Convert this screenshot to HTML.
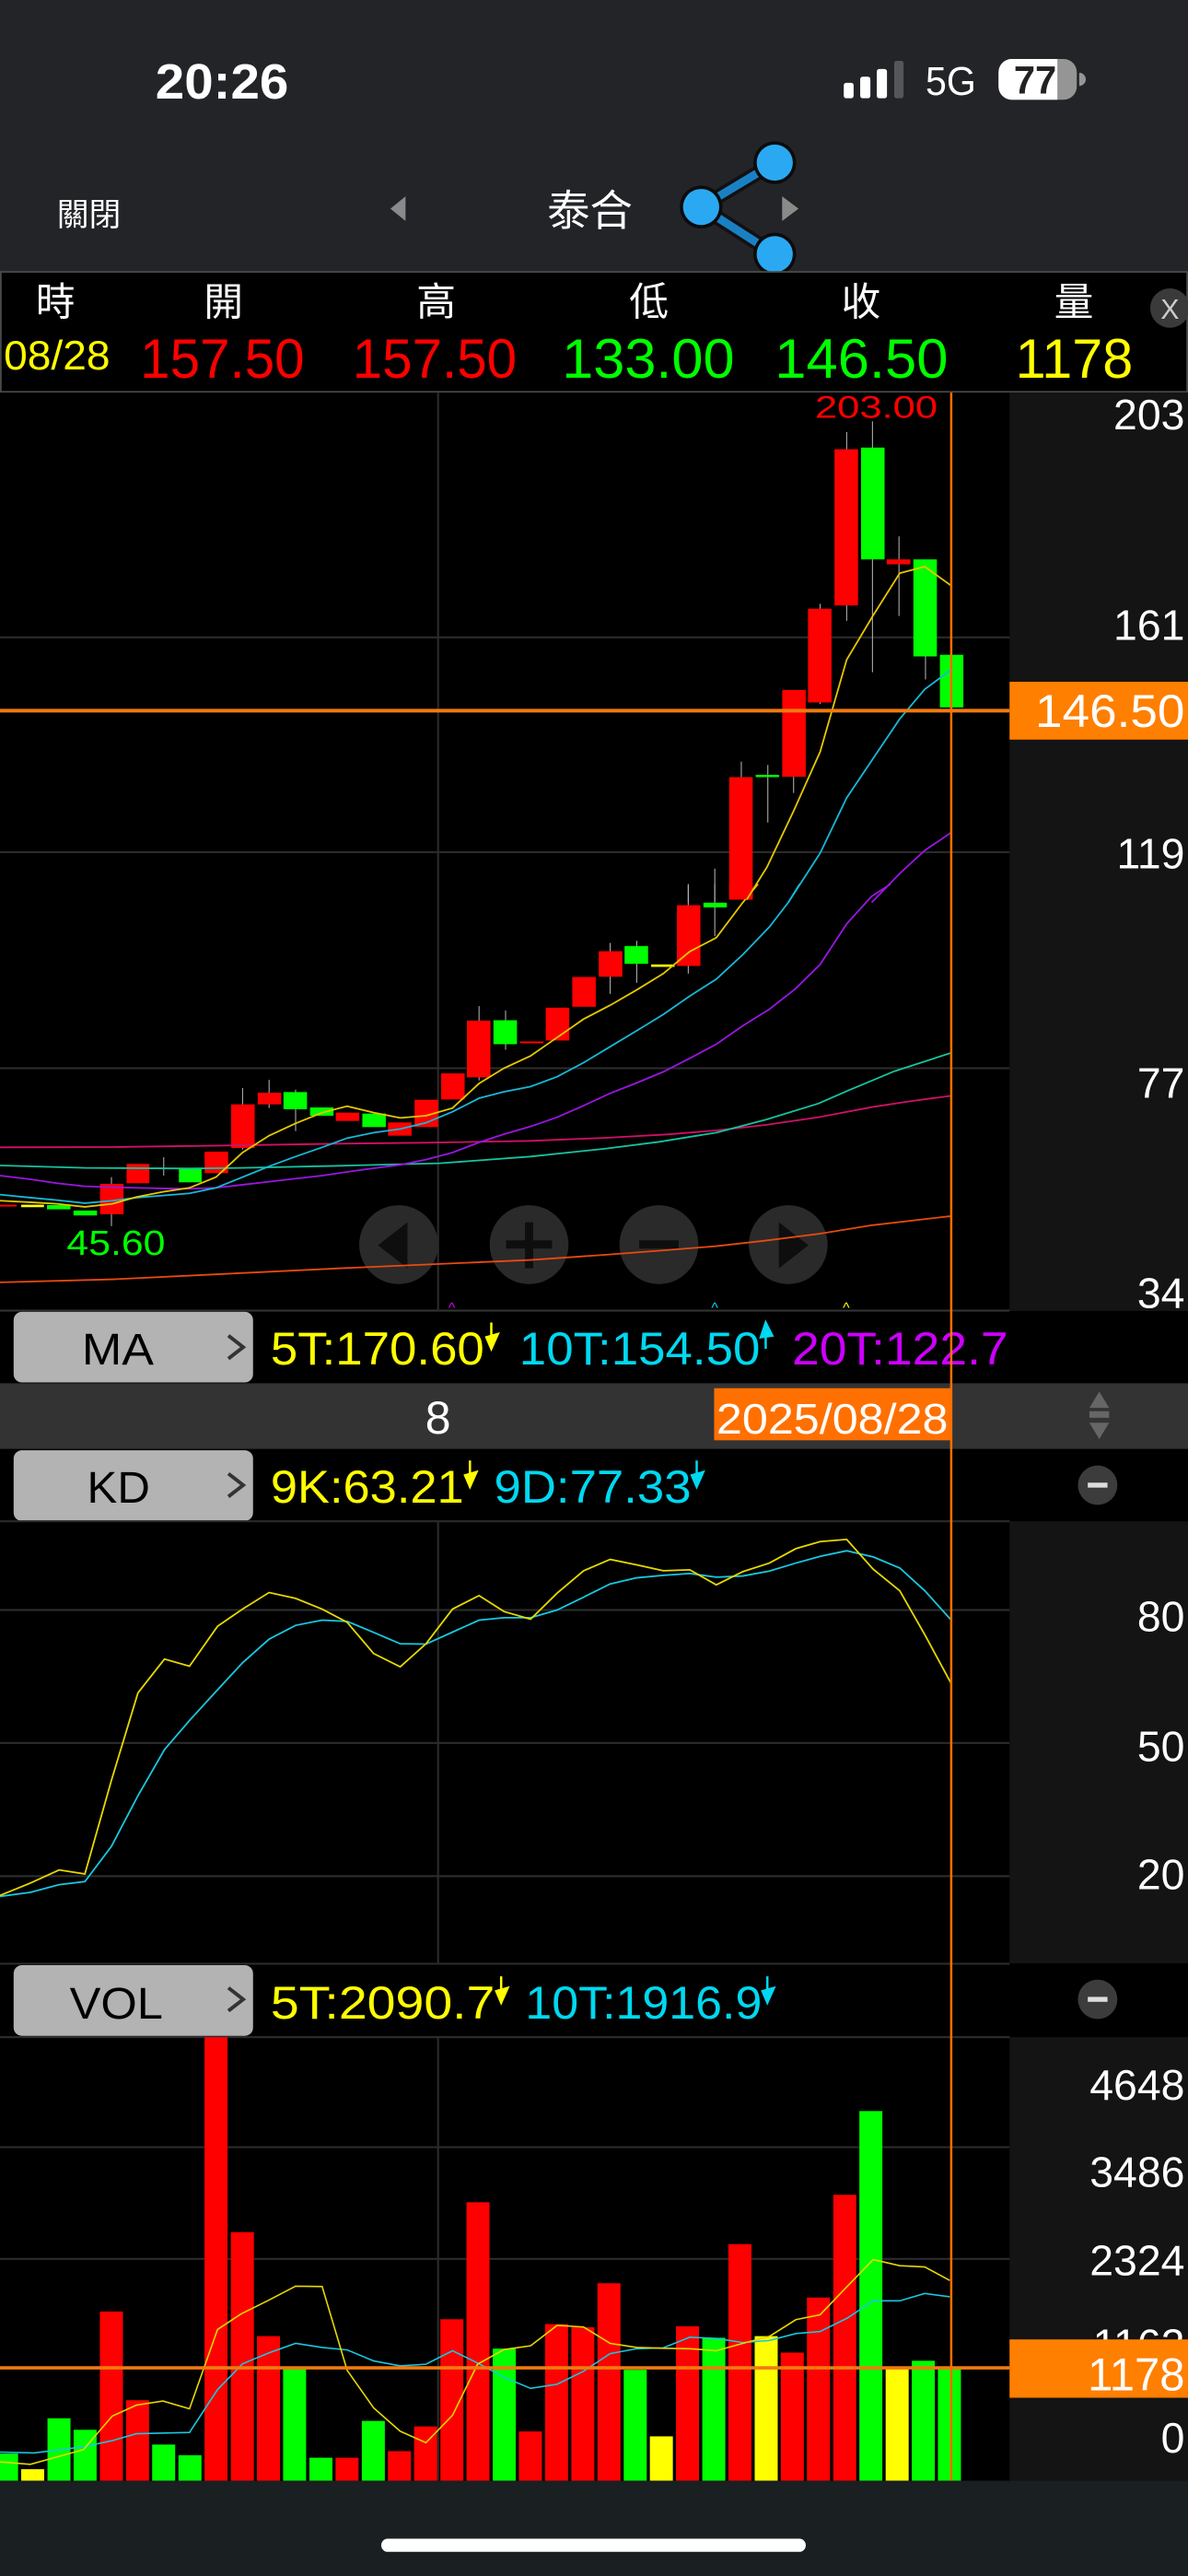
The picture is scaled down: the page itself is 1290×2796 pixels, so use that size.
<!DOCTYPE html>
<html><head><meta charset="utf-8"><style>
html,body{margin:0;padding:0;background:#000;}
svg{display:block}
text{font-family:"Liberation Sans","Noto Sans CJK TC",sans-serif;}
</style></head><body>
<svg xmlns="http://www.w3.org/2000/svg" width="1290" height="2796" viewBox="0 0 723 1568" preserveAspectRatio="none">
<!-- header bg -->
<rect x="0" y="0" width="723" height="166" fill="#232428"/>
<text x="94.6" y="60" font-size="30" fill="#fff" font-weight="bold" textLength="81" lengthAdjust="spacingAndGlyphs">20:26</text>
<rect x="513.5" y="50.4" width="6" height="9.4" rx="1.5" fill="#fff"/>
<rect x="523.5" y="46.7" width="6.2" height="13.1" rx="1.5" fill="#fff"/>
<rect x="533.6" y="42" width="6.2" height="17.8" rx="1.5" fill="#fff"/>
<rect x="544.2" y="37" width="5.7" height="22.8" rx="1.5" fill="#55565a"/>
<text x="563.3" y="57.9" font-size="24.5" fill="#fff" textLength="30.7" lengthAdjust="spacingAndGlyphs">5G</text>
<rect x="607.7" y="35.9" width="47.6" height="24.8" rx="8" fill="#959595"/>
<path d="M615.7 35.9 H643.5 V60.7 H615.7 A8 8 0 0 1 607.7 52.7 V43.9 A8 8 0 0 1 615.7 35.9Z" fill="#fff"/>
<text x="617" y="57" font-size="24" font-weight="bold" fill="#222" textLength="26" lengthAdjust="spacingAndGlyphs">77</text>
<path d="M656.8 44.3 A4 4 0 0 1 656.8 52.3Z" fill="#959595"/>
<text x="34.6" y="137.5" font-size="19.5" fill="#fff">關閉</text>
<polygon points="246.8,119.5 246.8,134.5 237.6,127" fill="#8a8a8a"/>
<text x="333" y="137.5" font-size="26" fill="#fff">泰合</text>
<polygon points="476,119.5 476,134.5 486,127" fill="#8a8a8a"/>
<g>
<line x1="426.7" y1="126" x2="471.5" y2="99" stroke="#111" stroke-width="9"/>
<line x1="426.7" y1="126" x2="471.5" y2="154.7" stroke="#111" stroke-width="9"/>
<line x1="426.7" y1="126" x2="471.5" y2="99" stroke="#1a80c4" stroke-width="5"/>
<line x1="426.7" y1="126" x2="471.5" y2="154.7" stroke="#1a80c4" stroke-width="5"/>
<circle cx="471.5" cy="99" r="13" fill="#0b0b0b"/>
<circle cx="426.7" cy="126" r="13" fill="#0b0b0b"/>
<circle cx="471.5" cy="154.7" r="13" fill="#0b0b0b"/>
<circle cx="471.5" cy="99" r="11" fill="#2aa9f2"/>
<circle cx="426.7" cy="126" r="11" fill="#2aa9f2"/>
<circle cx="471.5" cy="154.7" r="11" fill="#2aa9f2"/>
</g>
<!-- info table -->
<rect x="0.5" y="165.5" width="722" height="73" fill="#000" stroke="#4a4a4a" stroke-width="1"/>
<g font-size="24" fill="#fff">
<text x="21.7" y="192">時</text><text x="124" y="192">開</text><text x="253.5" y="192">高</text>
<text x="383" y="192">低</text><text x="512" y="192">收</text><text x="641.5" y="192">量</text>
</g>
<circle cx="712" cy="187.5" r="12" fill="#3a3a3a"/>
<text x="712" y="194" font-size="17" fill="#ccc" text-anchor="middle">X</text>
<text x="2.3" y="225" font-size="25" fill="#ffff00" textLength="64.7" lengthAdjust="spacingAndGlyphs">08/28</text>
<text x="85.3" y="230" font-size="34" fill="#ff0000" textLength="100" lengthAdjust="spacingAndGlyphs">157.50</text>
<text x="214.5" y="230" font-size="34" fill="#ff0000" textLength="100" lengthAdjust="spacingAndGlyphs">157.50</text>
<text x="342" y="230" font-size="34" fill="#00ff00" textLength="105" lengthAdjust="spacingAndGlyphs">133.00</text>
<text x="471.5" y="230" font-size="34" fill="#00ff00" textLength="105.5" lengthAdjust="spacingAndGlyphs">146.50</text>
<text x="618" y="230" font-size="34" fill="#ffff00" textLength="71.5" lengthAdjust="spacingAndGlyphs">1178</text>

<!-- main chart -->
<rect x="0" y="239" width="614.4" height="559" fill="#000"/>
<rect x="614.4" y="239" width="108.6" height="559" fill="#141414"/>
<g stroke="#2b2b2b" stroke-width="1.2">
<line x1="0" y1="388" x2="614.4" y2="388"/>
<line x1="0" y1="518.7" x2="614.4" y2="518.7"/>
<line x1="0" y1="650.2" x2="614.4" y2="650.2"/>
<line x1="0" y1="797.8" x2="614.4" y2="797.8" stroke="#333"/>
<line x1="266.6" y1="239" x2="266.6" y2="798"/>
</g>
<!-- nav buttons -->
<g fill="#2a2a2a">
<circle cx="242.6" cy="757.6" r="24"/><circle cx="322" cy="757.6" r="24"/>
<circle cx="401" cy="757.6" r="24"/><circle cx="479.7" cy="757.6" r="24"/>
</g>
<g fill="#0e0e0e">
<polygon points="248,744 248,772 230,758"/>
<rect x="319.5" y="744" width="5" height="28"/><rect x="308" y="755" width="28" height="5"/>
<rect x="389" y="755" width="24" height="5"/>
<polygon points="474,744 474,772 492,758"/>
</g>
<!-- lower candles & lines (zoom5 space) -->
<g transform="translate(0,538.1) scale(0.4613,0.1868)">
<g stroke="#bbb" stroke-width="1" vector-effect="non-scaling-stroke">
<line x1="147" y1="955" x2="147" y2="1115" vector-effect="non-scaling-stroke"/>
<line x1="216" y1="890" x2="216" y2="950" vector-effect="non-scaling-stroke"/>
<line x1="320" y1="665" x2="320" y2="865" vector-effect="non-scaling-stroke"/>
<line x1="355" y1="638" x2="355" y2="730" vector-effect="non-scaling-stroke"/>
<line x1="390" y1="670" x2="390" y2="805" vector-effect="non-scaling-stroke"/>
<line x1="632" y1="398" x2="632" y2="640" vector-effect="non-scaling-stroke"/>
<line x1="667" y1="412" x2="667" y2="540" vector-effect="non-scaling-stroke"/>
<line x1="805" y1="192" x2="805" y2="358" vector-effect="non-scaling-stroke"/>
<line x1="840" y1="185" x2="840" y2="322" vector-effect="non-scaling-stroke"/>
<line x1="908" y1="0" x2="908" y2="292" vector-effect="non-scaling-stroke"/>
<line x1="943" y1="0" x2="943" y2="170" vector-effect="non-scaling-stroke"/>
</g>
<rect x="0" y="1045" width="22" height="6" fill="#ff0000"/>
<rect x="28" y="1045" width="30" height="8" fill="#ffff00"/>
<rect x="62" y="1046" width="31" height="14" fill="#00ff00"/>
<rect x="97" y="1064" width="31" height="16" fill="#00ff00"/>
<rect x="132" y="977" width="31" height="99" fill="#ff0000"/>
<rect x="167" y="912" width="30" height="63" fill="#ff0000"/>
<rect x="236" y="928" width="30" height="44" fill="#00ff00"/>
<rect x="270" y="872" width="31" height="70" fill="#ff0000"/>
<rect x="305" y="718" width="31" height="142" fill="#ff0000"/>
<rect x="340" y="680" width="31" height="38" fill="#ff0000"/>
<rect x="374" y="678" width="31" height="56" fill="#00ff00"/>
<rect x="409" y="728" width="31" height="27" fill="#00ff00"/>
<rect x="443" y="745" width="31" height="27" fill="#ff0000"/>
<rect x="478" y="748" width="31" height="44" fill="#00ff00"/>
<rect x="512" y="777" width="31" height="43" fill="#ff0000"/>
<rect x="547" y="703" width="31" height="89" fill="#ff0000"/>
<rect x="582" y="617" width="31" height="85" fill="#ff0000"/>
<rect x="616" y="445" width="31" height="185" fill="#ff0000"/>
<rect x="651" y="444" width="31" height="78" fill="#00ff00"/>
<rect x="686" y="513" width="31" height="6" fill="#ff0000"/>
<rect x="720" y="403" width="31" height="107" fill="#ff0000"/>
<rect x="755" y="303" width="31" height="97" fill="#ff0000"/>
<rect x="790" y="219" width="31" height="83" fill="#ff0000"/>
<rect x="824" y="202" width="31" height="58" fill="#00ff00"/>
<rect x="859" y="262" width="31" height="8" fill="#ffff00"/>
<rect x="893" y="69" width="31" height="198" fill="#ff0000"/>
<rect x="928" y="61" width="31" height="15" fill="#00ff00"/>
<rect x="962" y="0" width="31" height="51" fill="#ff0000"/>
<g fill="none" stroke-width="1.8">
<polyline vector-effect="non-scaling-stroke" stroke="#e84a10" points="0,1298 150,1288 300,1270 450,1252 580,1238 700,1225 800,1208 880,1193 945,1180 1010,1162 1080,1140 1150,1112 1255,1082"/>
<polyline vector-effect="non-scaling-stroke" stroke="#d0106a" points="0,858 150,857 300,852 450,846 560,843 700,837 800,827 880,816 945,803 1010,785 1080,760 1150,727 1200,708 1255,690"/>
<polyline vector-effect="non-scaling-stroke" stroke="#17c3a0" points="0,917 112,925 250,927 320,925 450,918 580,910 700,888 800,862 870,840 945,810 1010,768 1080,715 1120,672 1180,610 1255,550"/>
<polyline vector-effect="non-scaling-stroke" stroke="#9a16e0" points="0,950 40,962 75,975 112,985 148,988 180,990 215,992 250,993 285,990 320,980 355,970 390,960 425,950 458,938 493,926 528,915 562,898 597,875 632,842 665,815 700,790 735,760 770,722 805,682 840,648 875,612 910,568 945,522 980,462 1015,408 1050,340 1082,262 1117,130 1150,40 1175,0"/>
<polyline vector-effect="non-scaling-stroke" stroke="#18b8d8" points="0,1012 40,1022 75,1030 112,1040 148,1032 180,1022 215,1015 250,1008 285,990 320,955 355,920 390,888 425,858 458,828 493,810 528,798 562,778 597,742 632,698 665,677 700,660 735,628 770,582 805,530 840,478 875,425 910,365 945,310 980,230 1015,140 1040,60 1055,0"/>
<polyline vector-effect="non-scaling-stroke" stroke="#e6c800" points="0,1032 40,1037 75,1042 112,1052 148,1042 180,1020 215,1003 250,990 285,955 320,875 355,820 390,780 425,745 458,724 493,745 528,762 562,755 597,730 632,650 665,600 700,560 735,500 770,440 805,395 840,345 875,292 910,220 945,175 980,60 1000,0"/>
</g>
</g>
<!-- upper candles (zoom4 space) -->
<g transform="translate(0,235.4) scale(0.4613,0.2002)">
<g stroke="#bbb" stroke-width="1">
<line vector-effect="non-scaling-stroke" x1="978" y1="1140" x2="978" y2="1190"/>
<line vector-effect="non-scaling-stroke" x1="1013" y1="1150" x2="1013" y2="1325"/>
<line vector-effect="non-scaling-stroke" x1="1047" y1="1180" x2="1047" y2="1235"/>
<line vector-effect="non-scaling-stroke" x1="1082" y1="660" x2="1082" y2="965"/>
<line vector-effect="non-scaling-stroke" x1="1117" y1="138" x2="1117" y2="712"/>
<line vector-effect="non-scaling-stroke" x1="1151" y1="105" x2="1151" y2="868"/>
<line vector-effect="non-scaling-stroke" x1="1186" y1="455" x2="1186" y2="697"/>
<line vector-effect="non-scaling-stroke" x1="1221" y1="820" x2="1221" y2="890"/>
<line vector-effect="non-scaling-stroke" x1="943" y1="1465" x2="943" y2="1568"/>
<line vector-effect="non-scaling-stroke" x1="908" y1="1515" x2="908" y2="1568"/>
</g>
<rect x="962" y="1187" width="31" height="371" fill="#ff0000"/>
<rect x="997" y="1180" width="31" height="7" fill="#00ff00"/>
<rect x="1032" y="922" width="31" height="264" fill="#ff0000"/>
<rect x="1066" y="675" width="31" height="285" fill="#ff0000"/>
<rect x="1101" y="190" width="31" height="475" fill="#ff0000"/>
<rect x="1136" y="185" width="31" height="340" fill="#00ff00"/>
<rect x="1170" y="525" width="31" height="15" fill="#ff0000"/>
<rect x="1205" y="525" width="31" height="295" fill="#00ff00"/>
<rect x="1240" y="815" width="31" height="160" fill="#00ff00"/>
<g fill="none" stroke-width="1.8">
<polyline vector-effect="non-scaling-stroke" stroke="#9a16e0" points="1150,1568 1187,1480 1220,1410 1255,1355"/>
<polyline vector-effect="non-scaling-stroke" stroke="#18b8d8" points="1040,1568 1082,1418 1117,1250 1152,1130 1187,1010 1220,920 1255,860"/>
<polyline vector-effect="non-scaling-stroke" stroke="#e6c800" points="985,1560 1012,1460 1047,1290 1082,1110 1117,830 1152,695 1187,567 1220,547 1255,605"/>
</g>
</g>
<text x="496" y="254.4" font-size="19" fill="#ff0000" textLength="74.6" lengthAdjust="spacingAndGlyphs">203.00</text>
<text x="40.6" y="763.8" font-size="21.5" fill="#00ff00" textLength="60" lengthAdjust="spacingAndGlyphs">45.60</text>
<line x1="0" y1="432.6" x2="614.4" y2="432.6" stroke="#f07a10" stroke-width="2.2"/>
<rect x="614.4" y="415" width="108.6" height="35.2" fill="#ff7f00"/>
<text x="721" y="442.6" font-size="28" fill="#fff" text-anchor="end" textLength="91" lengthAdjust="spacingAndGlyphs">146.50</text>
<g font-size="26" fill="#fff" text-anchor="end">
<text x="721" y="261.4">203</text><text x="721" y="389.6">161</text>
<text x="721" y="528.7">119</text><text x="721" y="668.3">77</text><text x="721" y="796">34</text>
</g>
<g font-size="9" text-anchor="middle">
<text x="275" y="799" fill="#cc00ff">^</text><text x="435" y="799" fill="#00d8f0">^</text><text x="515" y="799" fill="#ffff00">^</text>
</g>

<!-- MA row -->
<rect x="0" y="798.5" width="723" height="43.5" fill="#000"/>
<rect x="8.3" y="798.5" width="145.7" height="43" rx="5" fill="#b3b3b3"/>
<text x="49.8" y="830.5" font-size="27" fill="#000" textLength="43.8" lengthAdjust="spacingAndGlyphs">MA</text>
<polyline points="139,813 148,820 139,827" fill="none" stroke="#333" stroke-width="2.2"/>
<text x="164.7" y="830.5" font-size="28" fill="#ffff00" textLength="130" lengthAdjust="spacingAndGlyphs">5T:170.60</text>
<path d="M299 805 V820 M296 814 L299 821 L303 812 Z" stroke="#ffff00" stroke-width="1.4" fill="#ffff00"/>
<text x="316" y="830.5" font-size="28" fill="#00d8f0" textLength="146.6" lengthAdjust="spacingAndGlyphs">10T:154.50</text>
<path d="M466 821 V806 M463 814 L466 805 L470 813 Z" stroke="#00d8f0" stroke-width="1.4" fill="#00d8f0"/>
<text x="482" y="830.5" font-size="28" fill="#cc00ff" textLength="131.5" lengthAdjust="spacingAndGlyphs">20T:122.7</text>
<!-- date row -->
<rect x="0" y="842" width="723" height="40" fill="#333333"/>
<text x="266.6" y="872.5" font-size="28" fill="#fff" text-anchor="middle">8</text>
<rect x="434.6" y="845" width="144.4" height="31.7" fill="#ff7000"/>
<text x="436" y="872.5" font-size="26" fill="#fff" textLength="141" lengthAdjust="spacingAndGlyphs">2025/08/28</text>
<polygon points="669,847 663,857 675,857" fill="#666"/>
<rect x="663" y="859" width="12" height="4" fill="#666"/>
<polygon points="669,876 663,866 675,866" fill="#666"/>
<!-- KD row -->
<rect x="0" y="882" width="723" height="44" fill="#000"/>
<rect x="8.3" y="882.8" width="145.7" height="43" rx="5" fill="#b3b3b3"/>
<text x="53" y="914.6" font-size="27" fill="#000" textLength="38.3" lengthAdjust="spacingAndGlyphs">KD</text>
<polyline points="139,897 148,904 139,911" fill="none" stroke="#333" stroke-width="2.2"/>
<text x="164.7" y="914.6" font-size="28" fill="#ffff00" textLength="117.6" lengthAdjust="spacingAndGlyphs">9K:63.21</text>
<path d="M286 889 V904 M283 898 L286 905 L290 896 Z" stroke="#ffff00" stroke-width="1.4" fill="#ffff00"/>
<text x="300.7" y="914.6" font-size="28" fill="#00d8f0" textLength="120" lengthAdjust="spacingAndGlyphs">9D:77.33</text>
<path d="M424 889 V904 M421 898 L424 905 L428 896 Z" stroke="#00d8f0" stroke-width="1.4" fill="#00d8f0"/>
<circle cx="668" cy="904" r="12" fill="#3c3c3c"/>
<rect x="662" y="902.5" width="12" height="3" fill="#ddd"/>
<!-- KD chart -->
<rect x="0" y="926" width="614.4" height="269" fill="#000"/>
<rect x="614.4" y="926" width="108.6" height="269" fill="#141414"/>
<g stroke="#2b2b2b" stroke-width="1.2">
<line x1="0" y1="926" x2="614.4" y2="926"/>
<line x1="0" y1="980" x2="614.4" y2="980"/>
<line x1="0" y1="1060.9" x2="614.4" y2="1060.9"/>
<line x1="0" y1="1142" x2="614.4" y2="1142"/>
<line x1="266.6" y1="926" x2="266.6" y2="1195"/>
</g>
<g transform="translate(0,919.3) scale(0.4613,0.1868)" fill="none" stroke-width="1.8">
<polyline vector-effect="non-scaling-stroke" stroke="#18c8e0" points="0,1258 40,1245 78,1220 112,1210 147,1095 182,930 217,780 250,685 287,585 320,497 355,420 390,375 425,358 458,362 493,398 528,435 562,436 597,397 632,358 665,350 700,350 735,325 770,283 805,240 840,220 875,212 910,206 945,218 980,214 1015,198 1050,172 1082,150 1117,132 1152,152 1187,188 1220,262 1255,358"/>
<polyline vector-effect="non-scaling-stroke" stroke="#e6d800" points="0,1255 40,1215 78,1172 112,1185 147,880 182,595 217,485 250,508 287,378 320,322 355,268 390,287 425,322 458,365 493,467 528,510 562,435 597,322 632,278 665,330 700,355 735,270 770,197 805,160 840,178 875,197 910,194 945,243 980,200 1015,172 1050,125 1082,102 1117,95 1152,192 1187,262 1220,405 1255,565"/>
</g>
<g font-size="26" fill="#fff" text-anchor="end">
<text x="721" y="993">80</text><text x="721" y="1072">50</text><text x="721" y="1150">20</text>
</g>
<!-- VOL row -->
<rect x="0" y="1195.5" width="723" height="44.5" fill="#000"/>
<line x1="0" y1="1195.3" x2="614.4" y2="1195.3" stroke="#2b2b2b" stroke-width="1.2"/>
<rect x="8.3" y="1196.2" width="145.7" height="43" rx="5" fill="#b3b3b3"/>
<text x="42.4" y="1228.8" font-size="27" fill="#000" textLength="56.8" lengthAdjust="spacingAndGlyphs">VOL</text>
<polyline points="139,1210 148,1217 139,1224" fill="none" stroke="#333" stroke-width="2.2"/>
<text x="164.7" y="1228.8" font-size="28" fill="#ffff00" textLength="136.5" lengthAdjust="spacingAndGlyphs">5T:2090.7</text>
<path d="M305 1203 V1218 M302 1212 L305 1219 L309 1210 Z" stroke="#ffff00" stroke-width="1.4" fill="#ffff00"/>
<text x="319.7" y="1228.8" font-size="28" fill="#00d8f0" textLength="144" lengthAdjust="spacingAndGlyphs">10T:1916.9</text>
<path d="M467 1203 V1218 M464 1212 L467 1219 L471 1210 Z" stroke="#00d8f0" stroke-width="1.4" fill="#00d8f0"/>
<circle cx="668" cy="1217" r="12" fill="#3c3c3c"/>
<rect x="662" y="1215.5" width="12" height="3" fill="#ddd"/>
<!-- VOL chart -->
<rect x="0" y="1240" width="614.4" height="270" fill="#000"/>
<rect x="614.4" y="1240" width="108.6" height="270" fill="#141414"/>
<g stroke="#2b2b2b" stroke-width="1.2">
<line x1="0" y1="1240" x2="614.4" y2="1240"/>
<line x1="0" y1="1307" x2="614.4" y2="1307"/>
<line x1="0" y1="1375" x2="614.4" y2="1375"/>
<line x1="266.6" y1="1240" x2="266.6" y2="1510"/>
</g>
<g>
<rect x="0" y="1493.5" width="11" height="16.5" fill="#00ff00"/>
<rect x="12.9" y="1503" width="14" height="7" fill="#ffff00"/>
<rect x="28.9" y="1472" width="14" height="38" fill="#00ff00"/>
<rect x="44.8" y="1479" width="14" height="31" fill="#00ff00"/>
<rect x="60.8" y="1407" width="14" height="103" fill="#ff0000"/>
<rect x="76.7" y="1461" width="14" height="49" fill="#ff0000"/>
<rect x="92.6" y="1488" width="14" height="22" fill="#00ff00"/>
<rect x="108.6" y="1494.5" width="14" height="15.5" fill="#00ff00"/>
<rect x="124.5" y="1240" width="14" height="270" fill="#ff0000"/>
<rect x="140.5" y="1358.7" width="14" height="151.3" fill="#ff0000"/>
<rect x="156.4" y="1422" width="14" height="88" fill="#ff0000"/>
<rect x="172.3" y="1442" width="14" height="68" fill="#00ff00"/>
<rect x="188.3" y="1496" width="14" height="14" fill="#00ff00"/>
<rect x="204.2" y="1496" width="14" height="14" fill="#ff0000"/>
<rect x="220.2" y="1473.6" width="14" height="36.4" fill="#00ff00"/>
<rect x="236.1" y="1492" width="14" height="18" fill="#ff0000"/>
<rect x="252" y="1477" width="14" height="33" fill="#ff0000"/>
<rect x="268" y="1411.7" width="14" height="98.3" fill="#ff0000"/>
<rect x="283.9" y="1340.5" width="14" height="169.5" fill="#ff0000"/>
<rect x="299.9" y="1429.6" width="14" height="80.4" fill="#00ff00"/>
<rect x="315.8" y="1480" width="14" height="30" fill="#ff0000"/>
<rect x="331.7" y="1414.7" width="14" height="95.3" fill="#ff0000"/>
<rect x="347.7" y="1416.6" width="14" height="93.4" fill="#ff0000"/>
<rect x="363.6" y="1389.8" width="14" height="120.2" fill="#ff0000"/>
<rect x="379.6" y="1442.5" width="14" height="67.5" fill="#00ff00"/>
<rect x="395.5" y="1483" width="14" height="27" fill="#ffff00"/>
<rect x="411.4" y="1416" width="14" height="94" fill="#ff0000"/>
<rect x="427.4" y="1423" width="14" height="87" fill="#00ff00"/>
<rect x="443.3" y="1366" width="14" height="144" fill="#ff0000"/>
<rect x="459.3" y="1422" width="14" height="88" fill="#ffff00"/>
<rect x="475.2" y="1432" width="14" height="78" fill="#ff0000"/>
<rect x="491.1" y="1398.5" width="14" height="111.5" fill="#ff0000"/>
<rect x="507.1" y="1336" width="14" height="174" fill="#ff0000"/>
<rect x="523" y="1285" width="14" height="225" fill="#00ff00"/>
<rect x="539" y="1442" width="14" height="68" fill="#ffff00"/>
<rect x="554.9" y="1437" width="14" height="73" fill="#00ff00"/>
<rect x="570.8" y="1442" width="14" height="68" fill="#00ff00"/>
</g>
<g transform="translate(0,1177.1) scale(0.4613,0.2488)" fill="none" stroke-width="1.6">
<polyline vector-effect="non-scaling-stroke" stroke="#18c8e0" points="0,1268 45,1270 110,1255 148,1240 180,1223 250,1220 287,1115 320,1052 355,1025 390,1002 425,1012 458,1018 493,1045 528,1057 562,1053 597,1020 630,1050 665,1085 700,1112 735,1102 770,1070 805,1027 840,1015 875,1013 910,987 945,990 980,1000 1015,995 1050,978 1082,973 1118,940 1152,898 1187,898 1220,880 1253,888"/>
<polyline vector-effect="non-scaling-stroke" stroke="#e6d800" points="0,1292 40,1298 110,1262 148,1180 180,1153 215,1143 250,1162 287,968 318,930 355,896 390,862 425,863 458,1068 493,1160 528,1217 562,1245 597,1178 630,1053 665,1017 700,1008 735,958 770,962 805,1002 840,1012 875,1014 910,1015 945,1020 980,1002 1015,985 1050,944 1082,932 1118,862 1152,797 1187,812 1220,815 1253,848"/>
</g>
<line x1="0" y1="1441.3" x2="614.4" y2="1441.3" stroke="#f07a10" stroke-width="2"/>
<g font-size="26" fill="#fff" text-anchor="end">
<text x="721" y="1278">4648</text><text x="721" y="1331">3486</text><text x="721" y="1385">2324</text>
<text x="721" y="1436">1162</text>
<text x="721" y="1493">0</text>
</g>
<rect x="614.4" y="1424" width="108.6" height="35.5" fill="#ff7f00"/>
<text x="721" y="1455" font-size="28" fill="#fff" text-anchor="end" textLength="59" lengthAdjust="spacingAndGlyphs">1178</text>
<!-- orange vertical -->
<line x1="578.9" y1="239" x2="578.9" y2="1510" stroke="#ff7000" stroke-width="1.4"/>
<!-- bottom -->
<rect x="0" y="1510" width="723" height="58" fill="#1a1f22"/>
<rect x="232" y="1545.3" width="258.4" height="8" rx="4" fill="#fff"/>
</svg>
</body></html>
